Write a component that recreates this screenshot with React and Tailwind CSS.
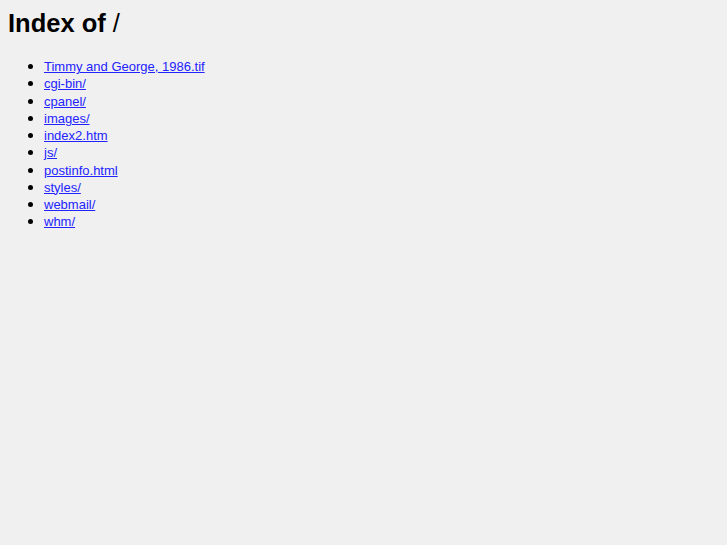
const entries = [
  'Timmy and George, 1986.tif',
  'cgi-bin/',
  'cpanel/',
  'images/',
  'index2.htm',
  'js/',
  'postinfo.html',
  'styles/',
  'webmail/',
  'whm/',
];

export default function App() {
  return (
    <div className="min-h-[545px] bg-[#f0f0f0] px-2 pt-[9px] text-black font-['Liberation_Sans',Arial,sans-serif]">
      <h1 className="text-[25.5px] leading-[29px] font-bold">
        Index of <span className="font-normal">/</span>
      </h1>
      <ul className="mt-[20px] pl-[36px] text-[13px] leading-[17.25px]">
        {entries.map((name) => (
          <li key={name} className="flex items-center">
            <span className="-ml-[16px] mr-[11px] h-[5px] w-[5px] shrink-0 rounded-full bg-black" />
            <a href="#" className="text-[#2323ff] underline">{name}</a>
          </li>
        ))}
      </ul>
    </div>
  );
}
